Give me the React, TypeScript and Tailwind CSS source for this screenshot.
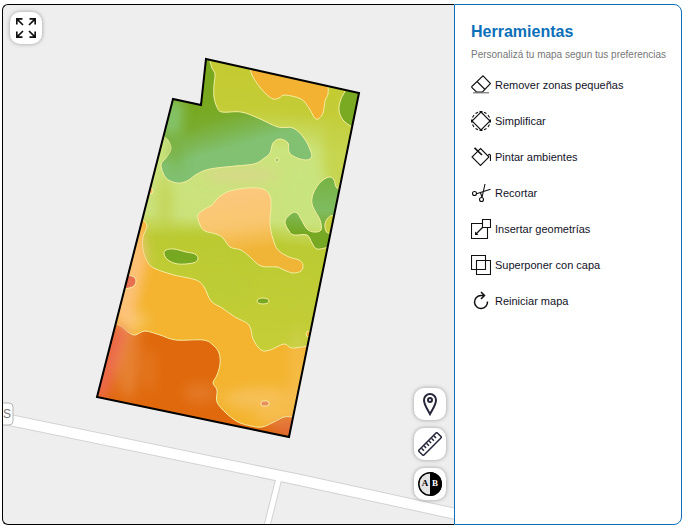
import type { ReactNode } from 'react';

type Point = [number, number];

const FIELD = '206,59 359,93 289,437 97,397 173,99 201,105';

// Turns a list of points into a smooth curve through all of them
function smooth(points: Point[], closed = true) {
  const n = points.length;
  const at = (i: number) => (closed ? points[(i + n) % n] : points[Math.max(0, Math.min(n - 1, i))]);
  let d = `M${points[0][0]} ${points[0][1]}`;
  for (let i = 0; i < (closed ? n : n - 1); i++) {
    const [p0, p1, p2, p3] = [at(i - 1), at(i), at(i + 1), at(i + 2)];
    d += `C${p1[0] + (p2[0] - p0[0]) / 6} ${p1[1] + (p2[1] - p0[1]) / 6} ${p2[0] - (p3[0] - p1[0]) / 6} ${p2[1] - (p3[1] - p1[1]) / 6} ${p2[0]} ${p2[1]}`;
  }
  return closed ? d + 'Z' : d;
}

const GREEN_NW = smooth([
  [209, 58], [212, 68], [215, 74], [214, 85], [214, 97], [217, 107], [222, 112], [241, 112], [258, 118], [278, 127],
  [293, 128], [304, 138], [311, 152], [311, 158], [305, 160], [295, 157], [289, 152], [288, 143], [280, 139],
  [273, 143], [270, 153], [263, 159], [254, 164], [235, 166], [210, 169], [197, 174], [187, 181], [177, 183],
  [166, 178], [161, 165], [166, 158], [171, 149], [168, 140], [163, 136],
], false) + 'L150 130L165 80L200 50Z';

const ORANGE_N = smooth([
  [250, 69], [253, 77], [259, 86], [266, 94], [273, 99], [279, 98], [285, 95], [301, 99], [309, 108], [314, 117],
  [318, 119], [323, 113], [325, 101], [328, 94], [328, 85],
], false) + 'L300 60Z';

const GREEN_NE = smooth([[346, 90], [341, 99], [339, 110], [343, 120], [352, 127]], false) + 'L370 127L365 85Z';

const GREEN_E = smooth([
  [340, 190], [336, 187], [334, 180], [330, 177], [323, 180], [316, 188], [312, 198], [313, 207], [320, 220], [321, 230],
  [314, 232], [307, 229], [301, 219], [297, 213], [292, 213], [285, 221], [289, 231], [294, 235], [307, 235],
  [312, 243], [317, 249], [329, 247],
], false) + 'L350 240L350 190Z';

const HOLE_E = smooth([[333, 216], [328, 218], [325, 224], [326, 231], [330, 233], [340, 226]]);

const ORANGE_MID = smooth([
  [198, 215], [205, 209], [212, 205], [219, 197], [230, 191], [248, 188], [263, 189], [270, 196], [271, 206],
  [270, 224], [273, 239], [278, 250], [289, 257], [299, 260], [303, 265], [301, 271], [293, 273], [284, 270],
  [277, 267], [261, 266], [250, 257], [241, 250], [230, 247], [223, 238], [216, 234], [205, 231], [200, 225],
]);

const GREEN_W = smooth([[166, 250], [174, 249], [186, 252], [195, 254], [198, 259], [193, 263], [178, 264], [168, 260], [164, 254]]);

const ORANGE_S = smooth([
  [143, 220], [147, 226], [143, 237], [143, 250], [148, 263], [156, 269], [174, 275], [196, 280], [204, 287],
  [211, 301], [222, 308], [235, 317], [249, 325], [253, 339], [261, 350], [270, 350], [284, 344], [292, 348],
  [308, 346],
], false) + 'L330 346L300 450L80 410L90 250Z';

const RED_S = smooth([
  [115, 324], [121, 326], [128, 332], [135, 335], [145, 331], [160, 335], [176, 340], [203, 340], [213, 345],
  [219, 353], [220, 364], [217, 375], [213, 383], [217, 390], [217, 402], [226, 413], [238, 422], [251, 426],
  [262, 427], [274, 422], [284, 417], [293, 417],
], false) + 'L310 450L80 410L100 320Z';

const RED_W = smooth([[127, 275], [134, 277], [136, 281], [134, 286], [129, 288], [122, 288], [122, 276]]);

// Soft patches of brighter ground over the zones: cx, cy, rx, ry, opacity
const PATCHES: [number, number, number, number, number][] = [
  [128, 355, 12, 44, 0.2],
  [150, 371, 5, 22, 0.12],
  [200, 393, 17, 10, 0.13],
  [255, 398, 34, 8, 0.2],
  [275, 416, 20, 8, 0.18],
  [298, 375, 8, 48, 0.16],
  [268, 400, 40, 16, 0.1],
  [135, 320, 14, 8, 0.3],
];

function MapCanvas() {
  return (
    <svg className="absolute inset-0 h-full w-full" viewBox="3 5 451 519" preserveAspectRatio="xMinYMin slice" aria-hidden="true">
      <defs>
        <clipPath id="field"><polygon points={FIELD} /></clipPath>
        <filter id="soft" x="-50%" y="-50%" width="200%" height="200%"><feGaussianBlur stdDeviation="6" /></filter>
        <linearGradient id="base" gradientUnits="userSpaceOnUse" x1="255" y1="60" x2="235" y2="350">
          <stop offset="0" stopColor="#c4cb31" />
          <stop offset=".17" stopColor="#c4cc36" />
          <stop offset=".3" stopColor="#cbe47d" />
          <stop offset=".55" stopColor="#cbe27b" />
          <stop offset=".63" stopColor="#bccb33" />
          <stop offset="1" stopColor="#c5ce37" />
        </linearGradient>
        <linearGradient id="greenNw" gradientUnits="userSpaceOnUse" x1="209" y1="100" x2="223" y2="150">
          <stop offset="0" stopColor="#79a81e" />
          <stop offset=".4" stopColor="#79ab2c" />
          <stop offset="1" stopColor="#81c171" />
        </linearGradient>
        <linearGradient id="greenE" gradientUnits="userSpaceOnUse" x1="320" y1="180" x2="317" y2="247">
          <stop offset="0" stopColor="#78b345" />
          <stop offset=".45" stopColor="#7fbc60" />
          <stop offset=".8" stopColor="#76a823" />
        </linearGradient>
        <linearGradient id="orangeMid" gradientUnits="userSpaceOnUse" x1="235" y1="195" x2="245" y2="270">
          <stop offset="0" stopColor="#fbc87c" />
          <stop offset=".4" stopColor="#f9c66f" />
          <stop offset=".75" stopColor="#f0b537" />
        </linearGradient>
      </defs>

      <g fill="none">
        <path d="M-5 417L300 480L470 517" stroke="#d3d3d3" strokeWidth="12" />
        <path d="M279 478L266 530" stroke="#d3d3d3" strokeWidth="7" />
        <path d="M-5 417L300 480L470 517" stroke="#fff" strokeWidth="10" />
        <path d="M279 478L266 530" stroke="#fff" strokeWidth="5" />
      </g>
      <rect x="-10" y="403" width="23" height="22" rx="4" fill="#fff" stroke="#b5b5b5" />
      <text x="3" y="418" fontSize="12" fill="#777" fontFamily="Liberation Sans, Arial, sans-serif">S</text>

      <g clipPath="url(#field)">
        <polygon points={FIELD} fill="url(#base)" />
        <g filter="url(#soft)">
          <ellipse cx="340" cy="150" rx="18" ry="45" fill="#c5ce3d" opacity=".7" />
          <ellipse cx="165" cy="205" rx="7" ry="30" fill="#c0cc3f" opacity=".6" />
          <ellipse cx="240" cy="175" rx="38" ry="9" fill="#d9d58a" opacity=".7" />
          <ellipse cx="301" cy="195" rx="18" ry="32" fill="#c5e682" opacity=".4" />
          <ellipse cx="215" cy="240" rx="60" ry="10" fill="#bac92f" opacity=".8" />
          <ellipse cx="225" cy="288" rx="22" ry="10" fill="#b9cc38" opacity=".7" />
        </g>
        <g stroke="#f3eda0" strokeWidth="1">
          <path d={GREEN_NW} fill="url(#greenNw)" />
          <path d={ORANGE_N} fill="#f3b232" />
          <path d={GREEN_NE} fill="#7aa922" />
          <path d={GREEN_E} fill="url(#greenE)" />
          <path d={HOLE_E} fill="#c5ce3b" />
          <path d={ORANGE_MID} fill="url(#orangeMid)" />
          <path d={GREEN_W} fill="#76a821" />
          <ellipse cx="263" cy="301" rx="6" ry="3" fill="#76a821" />
          <path d={ORANGE_S} fill="#f4b42f" />
          <path d={RED_S} fill="#e0690d" />
          <rect x="261" y="401" width="8" height="5" rx="2" fill="#e27339" />
          <circle cx="277" cy="160" r="2" fill="#9bc66b" />
          <circle cx="150" cy="191" r="3" fill="#f7bd62" />
          <circle cx="309" cy="334" r="3" fill="#f4b42f" />
        </g>
        <g filter="url(#soft)">
          {PATCHES.map(([cx, cy, rx, ry, opacity], i) => (
            <ellipse key={i} cx={cx} cy={cy} rx={rx} ry={ry} fill="#ffe3c4" opacity={opacity} />
          ))}
          <path d="M140 215L147 260L132 322L108 318Z" fill="#ffc48c" opacity=".8" />
          <path d="M90 398L113 325L128 330L106 400Z" fill="#ee6a55" opacity=".9" />
          <path d="M268 427L302 420L296 442Z" fill="#e46a48" opacity=".8" />
          <path d="M168 100L184 102L180 135L160 135Z" fill="#86c676" opacity=".9" />
          <ellipse cx="176" cy="155" rx="6" ry="14" fill="#78ad35" opacity=".6" />
        </g>
        <path d={RED_W} fill="#e77050" stroke="#f3eda0" />
      </g>
      <polygon points={FIELD} fill="none" stroke="#000" strokeWidth="2" />
    </svg>
  );
}

function MapButton({ label, children }: { label: string; children: ReactNode }) {
  return (
    <button type="button" aria-label={label} className="flex h-8 w-8 items-center justify-center rounded-[10px] bg-white shadow-[0_0_4px_rgba(0,0,0,0.35)]">
      {children}
    </button>
  );
}

function ToolIcon({ children }: { children: ReactNode }) {
  return (
    <svg className="h-5 w-5 shrink-0" viewBox="0 0 20 20" fill="none" stroke="#111" strokeWidth="1.1" aria-hidden="true">
      {children}
    </svg>
  );
}

const TOOLS: { label: string; icon: ReactNode }[] = [
  {
    label: 'Remover zonas pequeñas',
    icon: (
      <>
        <path d="M.8 11.500L12 .8L19.500 8.500L11.500 17H5.500L.8 12.500ZM6 6.500L14 14.500" />
        <path d="M2 17.800H18" stroke="#666" />
      </>
    ),
  },
  {
    label: 'Simplificar',
    icon: (
      <>
        <path d="M10 1L19 10L10 19L1 10Z" />
        <path d="M1.500 6.500L3 4M4.500 2.500L7 1.200M13 1.200L15.500 2.500M17 4L18.500 6.500M1.500 13.500L3 16M4.500 17.500L7 18.800M13 18.800L15.500 17.500M17 16L18.500 13.500" />
        <path d="M0 8.500h1.800v3H0zM18.200 8.500H20v3h-1.800zM8.500 0h3v1.500h-3zM8.500 18.500h3V20h-3z" fill="#111" stroke="none" />
      </>
    ),
  },
  {
    label: 'Pintar ambientes',
    icon: (
      <>
        <path d="M9.500 1.500L18 10L9.500 18.500L1 10Z" />
        <path d="M3.500 .8L11 8" strokeWidth="1.600" />
        <path d="M17 8.500C18.500 6.500 19.500 7.500 19.500 9V14" />
      </>
    ),
  },
  {
    label: 'Recortar',
    icon: (
      <>
        <circle cx="3.500" cy="10.500" r="2" />
        <circle cx="10.500" cy="16.500" r="2" />
        <path d="M5.500 10.800L19.500 6.200M11 14.500L14 1M9.500 9.500L11 14.500" />
      </>
    ),
  },
  {
    label: 'Insertar geometrías',
    icon: (
      <>
        <path d="M11 4.500H.5V19.500H16.500V9" />
        <path d="M11.500 .5H19.500V8.500H11.500Z" />
        <path d="M11.500 8.500L5 15" strokeWidth="1.300" />
        <path d="M4 12.500V16H7.500Z" fill="#111" stroke="none" />
      </>
    ),
  },
  {
    label: 'Superponer con capa',
    icon: <path d="M.5 .5H14.500V14.500H.5ZM5.500 5.500H19.500V19.500H5.500Z" />,
  },
  {
    label: 'Reiniciar mapa',
    icon: <path d="M16.500 10.500A6.500 6.500 0 1 1 10 4.500H13M10 1L13.500 4.500L10 8" strokeWidth="1.500" />,
  },
];

export default function App() {
  return (
    <div className="flex h-screen bg-white pt-1 pr-2 pb-1 pl-0.5 font-['Liberation_Sans',Arial,sans-serif]">
      <section aria-label="Mapa" className="relative min-w-0 flex-1 overflow-hidden rounded-l-md border border-r-0 border-black bg-[#eee]">
        <MapCanvas />
        <div className="absolute top-[7px] left-[7px]">
          <MapButton label="Pantalla completa">
            <svg className="h-5 w-5" viewBox="0 0 20 20" fill="none" stroke="#111" strokeWidth="1.7">
              <path d="M.8 6.500V.8H6.500M.8 .8L7 7M13.500 .8H19.200V6.500M19.200 .8L13 7M.8 13.500V19.200H6.500M.8 19.200L7 13M19.200 13.500V19.200H13.500M19.200 19.200L13 13" />
            </svg>
          </MapButton>
        </div>
        <div className="absolute right-2 bottom-6 flex flex-col gap-2">
          <MapButton label="Marcador">
            <svg className="h-6 w-6" viewBox="0 0 24 24" fill="none" stroke="#26263a" strokeWidth="2">
              <path d="M12 22C10 18 6 13 6 8A6 6 0 0 1 18 8C18 13 14 18 12 22Z" />
              <circle cx="12" cy="8" r="2" />
            </svg>
          </MapButton>
          <MapButton label="Medir">
            <svg className="h-6 w-6" viewBox="0 0 24 24" fill="none" stroke="#26263a" strokeWidth="1.500">
              <g transform="rotate(-45 12 12)">
                <rect x="-1" y="8.500" width="26" height="7" rx="1" />
                <path d="M3 9V12.500M6.500 9V12M10 9V12.500M13.500 9V12M17 9V12.500M20.500 9V12" />
              </g>
            </svg>
          </MapButton>
          <MapButton label="Comparar">
            <svg className="h-6 w-6" viewBox="0 0 24 24">
              <circle cx="12" cy="12" r="11.200" fill="#e4e4e4" stroke="#000" strokeWidth="1.500" />
              <path d="M12 0A12 12 0 0 1 12 24Z" />
              <g fontFamily="Liberation Serif, Times New Roman, serif" fontSize="9" fontWeight="bold" textAnchor="middle">
                <text x="7" y="14">A</text>
                <text x="17" y="14" fill="#fff">B</text>
              </g>
            </svg>
          </MapButton>
        </div>
      </section>

      <aside className="w-[228px] shrink-0 rounded-r-lg border border-[#0b70b8] px-4 pt-4">
        <h1 className="text-base leading-[22px] font-bold text-[#0b70b8]">Herramientas</h1>
        <p className="mt-1 text-[10px] leading-4 whitespace-nowrap text-[#777]">Personalizá tu mapa segun tus preferencias</p>
        <ul className="mt-3 flex flex-col gap-4">
          {TOOLS.map(tool => (
            <li key={tool.label}>
              <button type="button" className="flex h-5 items-center gap-1 text-[11px] leading-5 text-[#12121f]">
                <ToolIcon>{tool.icon}</ToolIcon>
                {tool.label}
              </button>
            </li>
          ))}
        </ul>
      </aside>
    </div>
  );
}
